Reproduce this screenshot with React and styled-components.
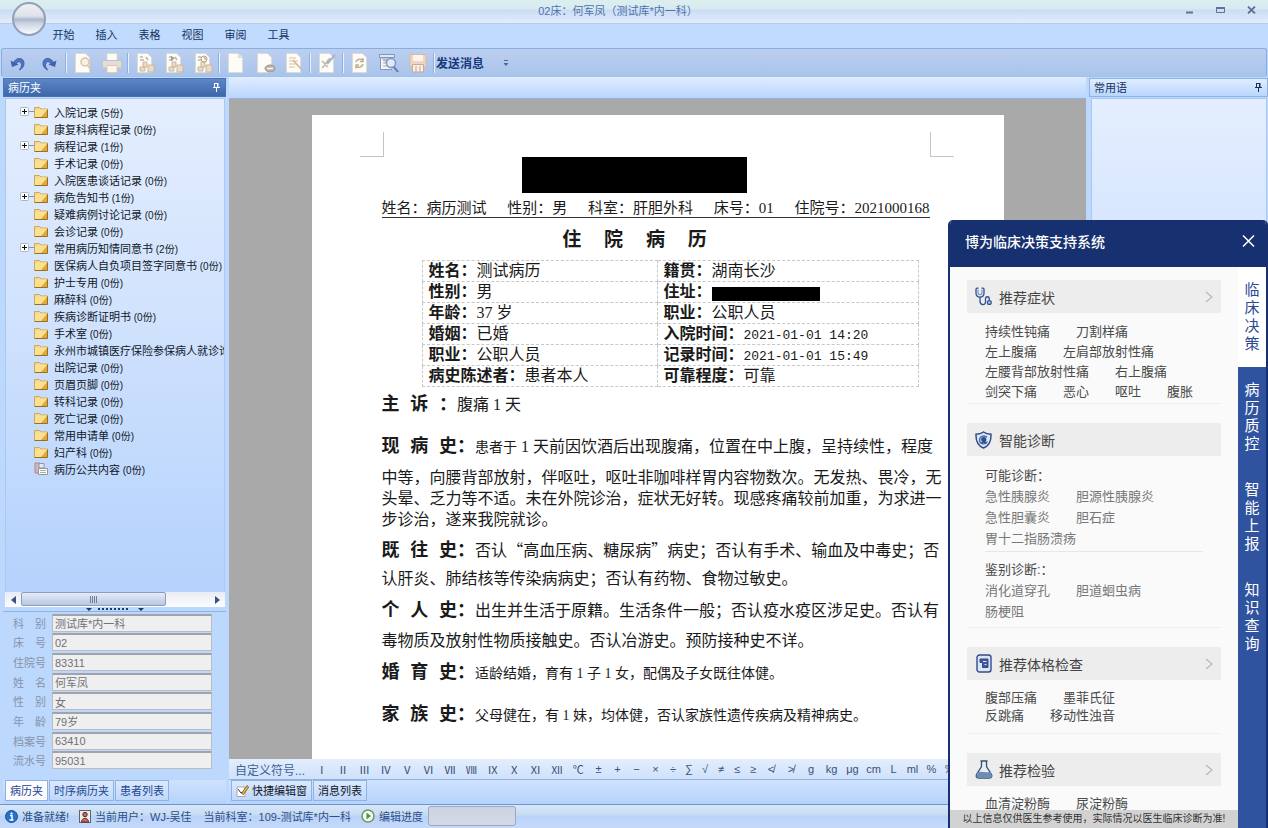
import React, { useState } from "react";
import styled, { createGlobalStyle } from "styled-components";

const GlobalStyle = createGlobalStyle`
  * {
    box-sizing: border-box;
  }
  body {
    margin: 0;
    overflow: hidden;
    font-family: "Liberation Sans", "Noto Sans CJK SC", sans-serif;
    font-size: 11px;
    color: #16335f;
  }
  button {
    font-family: inherit;
    font-size: inherit;
    color: inherit;
    background: none;
    border: none;
    padding: 0;
    cursor: pointer;
    white-space: nowrap;
  }
  svg {
    display: block;
    flex-shrink: 0;
  }
`;

/* ---------- window ---------- */

const Window = styled.div`
  position: relative;
  height: 100vh;
  display: flex;
  flex-direction: column;
  background-color: #bcd8fc;
  overflow: hidden;
`;

const TitleBar = styled.header`
  height: 24px;
  flex-shrink: 0;
  display: flex;
  align-items: center;
  padding-left: 62px;
  padding-bottom: 4px;
  background: linear-gradient(#dcefee 0, #d6eaf2 9px, #cbdcf3 10px, #e0ebfb 22px);
  border-bottom: 1px solid #b4cdea;
`;

const WindowTitle = styled.h1`
  flex: 1;
  margin: 0;
  text-align: center;
  font-size: 11px;
  font-weight: 400;
  color: #4d72ad;
`;

const WindowButton = styled.button`
  width: 31px;
  height: 20px;
  display: flex;
  align-items: center;
  justify-content: center;
`;

const WindowButtons = styled.div`
  width: 94px;
  display: flex;
`;

const Orb = styled.button`
  position: absolute;
  left: 12px;
  top: 2px;
  width: 34px;
  height: 34px;
  border-radius: 50%;
  border: 2px solid #929fb8;
  background: linear-gradient(#eeeff5 0%, #dfe2ea 40%, #adb8cf 52%, #ccd3e2 65%, #fbfcff 100%);
`;

const MenuBar = styled.nav`
  height: 24px;
  flex-shrink: 0;
  display: flex;
  align-items: center;
  padding-left: 42px;
  background-color: #c0dbfd;
`;

const MenuItem = styled.button`
  width: 43px;
  height: 20px;
  padding-bottom: 5px;
`;

const Toolbar = styled.div`
  height: 29px;
  flex-shrink: 0;
  display: flex;
  align-items: center;
  margin: 0 1px;
  border: 1px solid #88aee0;
  border-bottom-color: #a3c1ea;
  border-radius: 3px;
  background: linear-gradient(#bccff0, #a9c4ea);
`;

const ToolButton = styled.button`
  width: ${(props) => (props.$wide ? "31px" : "29px")};
  height: 24px;
  display: flex;
  align-items: center;
  justify-content: center;
`;

const Separator = styled.span`
  width: 2px;
  height: 20px;
  margin: 0 1px;
  border-left: 1px solid #8fb0de;
  border-right: 1px solid #e8f1fd;
`;

const SendButton = styled.button`
  height: 24px;
  font-size: 12px;
  font-weight: 700;
  color: #16397c;
`;

const MoreButton = styled.button`
  width: 44px;
  height: 24px;
  display: flex;
  align-items: center;
  justify-content: center;
`;

const Body = styled.div`
  flex: 1;
  min-height: 0;
  display: flex;
`;

/* ---------- left panel ---------- */

const LeftPanel = styled.aside`
  width: 229px;
  flex-shrink: 0;
  display: flex;
  flex-direction: column;
  padding: 1px 3px 0 3px;
`;

const PanelHeader = styled.div`
  height: 19px;
  flex-shrink: 0;
  display: flex;
  align-items: center;
  justify-content: space-between;
  padding: 0 4px 2px;
  color: ${(props) => (props.$active ? "#fff" : "#16335f")};
  background: ${(props) =>
    props.$active
      ? "linear-gradient(#5c86c6, #3c67aa)"
      : "linear-gradient(#e0edff, #bad6fd)"};
  border: 1px solid ${(props) => (props.$active ? "#4a72b0" : "#8db2e3")};
`;

const TreeBox = styled.div`
  flex: 1;
  min-height: 0;
  margin: 1px 1px 0 2px;
  border: 1px solid #a9c8f2;
  border-bottom: none;
  padding-top: 4px;
  overflow: hidden;
  color: #101828;
  background: linear-gradient(#e4eefe 0, #d0e2fd 45%, #b4d2fd 100%);
`;

const Tree = styled.ul`
  list-style: none;
  margin: 0;
  padding: 0 0 0 14px;
`;

const TreeRow = styled.li`
  height: 17px;
  display: flex;
  align-items: center;
  white-space: nowrap;
`;

const Expander = styled.span`
  width: 14px;
  flex-shrink: 0;
`;

const TreeLabel = styled.span`
  margin-left: 6px;
`;

const Count = styled.span`
  font-size: 10px;
`;

const ScrollBar = styled.div`
  height: 15px;
  flex-shrink: 0;
  display: flex;
  margin: 0 1px 0 2px;
  background: linear-gradient(#e8ecf4, #fdfdff);
`;

const ScrollArrow = styled.button`
  width: 16px;
  display: flex;
  align-items: center;
  justify-content: center;
`;

const ScrollTrack = styled.div`
  flex: 1;
`;

const ScrollThumb = styled.div`
  width: 77%;
  height: 14px;
  display: flex;
  align-items: center;
  justify-content: center;
  border: 1px solid #8b9dbd;
  border-radius: 2px;
  background: linear-gradient(#e6ebf8, #b9c7e0);
`;

const Splitter = styled.div`
  height: 5px;
  flex-shrink: 0;
  display: flex;
  justify-content: center;
  border-bottom: 1px solid #8db2e3;
`;

const PatientForm = styled.form`
  height: 168px;
  flex-shrink: 0;
  display: grid;
  grid-template-rows: repeat(8, 1fr);
  padding: 1px 14px 10px 10px;
`;

const Field = styled.div`
  display: flex;
  align-items: center;
`;

const FieldLabel = styled.label`
  width: 39px;
  color: #8893ab;
  white-space: pre;
`;

const FieldInput = styled.input`
  flex: 1;
  min-width: 0;
  height: 18px;
  padding: 0 2px;
  border: 1px solid #b9bcc2;
  border-top: 2px solid #a0a3aa;
  background-color: #efefef;
  color: #6f7278;
  font-family: inherit;
  font-size: 11px;
`;

const TabStrip = styled.div`
  height: 24px;
  flex-shrink: 0;
  display: flex;
  align-items: flex-start;
  gap: 1px;
  padding: 0 0 2px 2px;
  background: linear-gradient(#cfe2fd, #b5d3fc);
`;

const Tab = styled.button`
  height: 21px;
  display: flex;
  align-items: center;
  gap: 3px;
  padding: 0 4px 1px;
  border: 1px solid #8db2e3;
  color: ${(props) => (props.$dark ? "#101828" : "#1d4791")};
  background: ${(props) =>
    props.$active ? "#fdfdff" : "linear-gradient(#dce9fd, #c0d8fb)"};
`;

/* ---------- document ---------- */

const Center = styled.main`
  flex: 1;
  min-width: 0;
  display: flex;
  flex-direction: column;
`;

const DocTop = styled.div`
  height: 22px;
  flex-shrink: 0;
  background: linear-gradient(#e0edff, #b9d5fc);
  border-bottom: 1px solid #93b3de;
`;

const Canvas = styled.div`
  flex: 1;
  min-height: 0;
  padding-top: 16px;
  overflow: hidden;
  background-color: #aaa9a9;
`;

const Page = styled.article`
  width: 692px;
  min-height: 100%;
  margin: 0 auto;
  padding: 17px 50px 0 48px;
  background-color: #fff;
  color: #1a1a1a;
  font-family: "Liberation Serif", "Noto Sans CJK SC", serif;
  font-size: 16px;
`;

const Margins = styled.div`
  display: flex;
  justify-content: space-between;
  height: 25px;
`;

const Corner = styled.span`
  width: 24px;
  border: 0 solid #c4c4c4;
  border-bottom-width: 1px;
  border-left-width: ${(props) => (props.$right ? "1px" : "0")};
  border-right-width: ${(props) => (props.$right ? "0" : "1px")};
`;

const Sheet = styled.div`
  padding: 0 24px 0 22px;
  white-space: nowrap;
`;

const Redacted = styled.div`
  width: 225px;
  height: 36px;
  margin: 0 auto;
  background-color: #000;
`;

const RedactedInline = styled.span`
  display: inline-block;
  width: 108px;
  height: 14px;
  margin-top: 2px;
  vertical-align: middle;
  background-color: #000;
`;

const Masthead = styled.div`
  padding-right: 42px;
`;

const DocHeader = styled.div`
  display: flex;
  justify-content: space-between;
  margin-top: 7px;
  line-height: 17px;
  font-size: 15px;
  border-bottom: 1px solid #333;
`;

const Num = styled.span`
  font-family: "Liberation Mono", monospace;
  font-size: 13px;
`;

const Quote = styled.span`
  font-family: "Noto Sans CJK SC", sans-serif;
`;

const DocTitle = styled.h2`
  margin: 8px 0 4px;
  font-family: "Liberation Mono", "Noto Sans CJK SC", monospace;
  font-size: 19px;
  line-height: 30px;
  font-weight: 700;
  text-align: center;
  white-space: pre;
`;

const InfoTable = styled.table`
  width: 497px;
  margin-left: 40px;
  border-collapse: collapse;
  table-layout: fixed;
  line-height: 20px;
  td {
    height: 21px;
    padding: 0 0 0 6px;
    border: 1px dashed #c8c8c8;
    text-align: left;
  }
`;

const Cell = styled.div`
  height: 20px;
`;

const Section = styled.section`
  margin-top: ${(props) => props.$gap}px;
`;

const Line = styled.p`
  margin: 0;
  height: ${(props) => (props.$tight ? "21px" : "30px")};
  line-height: ${(props) => (props.$tight ? "21px" : "30px")};
`;

const Heading = styled.strong`
  font-family: "Liberation Mono", "Noto Sans CJK SC", monospace;
  font-size: 18px;
`;

const Small = styled.span`
  font-size: 14px;
`;

const SymbolBar = styled.div`
  height: 21px;
  flex-shrink: 0;
  display: flex;
  align-items: center;
  padding-left: 6px;
  overflow: hidden;
  background: linear-gradient(#e3eefd, #cfe1fb);
  border-bottom: 1px solid #8db2e3;
  color: #3a5078;
`;

const SymbolTitle = styled.span`
  width: 76px;
  font-size: 12px;
  color: #3f6296;
`;

const SymbolGroup = styled.div`
  flex-shrink: 0;
  display: grid;
  grid-auto-flow: column;
  grid-auto-columns: 1fr;
  width: ${(props) => props.$width}px;
`;

/* ---------- right panel ---------- */

const RightPanel = styled.aside`
  width: 182px;
  flex-shrink: 0;
  display: flex;
  flex-direction: column;
  padding: 1px 0 0 3px;
`;

const PhraseBox = styled.div`
  flex: 1;
  margin: 1px 1px 0 2px;
  border: 1px solid #a9c8f2;
  background: linear-gradient(#e4eefe 0, #c4dcfd 45%, #b4d2fd 100%);
`;

const StatusBar = styled.footer`
  height: 24px;
  flex-shrink: 0;
  display: flex;
  align-items: center;
  padding: 0 0 1px 5px;
  border-top: 1px solid #6d96cf;
  background: linear-gradient(#d8e6f8 0, #c7dcf2 10px, #b9d2f8 11px, #c6dafb 100%);
  color: #2c4f88;
`;

const StatusText = styled.span`
  margin: 0 ${(props) => props.$after}px 0 4px;
  white-space: nowrap;
`;

const Progress = styled.div`
  width: 88px;
  height: 20px;
  border: 1px solid #9aa9c2;
  border-radius: 3px;
  background: linear-gradient(#cdd3e2, #d5d9e6);
`;

/* ---------- decision support panel ---------- */

const Cds = styled.section`
  position: absolute;
  top: 220px;
  right: 0;
  bottom: 0;
  width: 320px;
  display: flex;
  flex-direction: column;
  border: 2px solid #163070;
  border-top: none;
  border-bottom: none;
  border-radius: 5px 5px 0 0;
  background-color: #fafafa;
  overflow: hidden;
`;

const CdsHeader = styled.div`
  height: 47px;
  flex-shrink: 0;
  display: flex;
  align-items: center;
  justify-content: space-between;
  padding: 0 11px 6px 15px;
  background-color: #163070;
  color: #fff;
`;

const CdsTitle = styled.h2`
  margin: 0;
  font-size: 14px;
  font-weight: 500;
`;

const CdsBody = styled.div`
  flex: 1;
  min-height: 0;
  display: flex;
`;

const CdsContent = styled.div`
  position: relative;
  flex: 1;
  padding: 13px 17px 0;
  overflow: hidden;
`;

const Card = styled.section`
  margin-bottom: 19px;
  border-bottom: 1px solid #f0f0f0;
`;

const CardHeader = styled.div`
  height: 33px;
  display: flex;
  align-items: center;
  gap: 7px;
  padding: 0 8px;
  background-color: #ededed;
  color: #444;
`;

const CardIcon = styled.span`
  width: 17px;
  display: flex;
  justify-content: center;
`;

const CardTitle = styled.h3`
  flex: 1;
  margin: 0;
  font-size: 14px;
  font-weight: 400;
`;

const CardBody = styled.div`
  padding: 9px 18px ${(props) => props.$bottom}px;
  font-size: 13px;
  color: #4a4a4a;
`;

const Terms = styled.div`
  display: flex;
  gap: 26px;
  line-height: ${(props) => (props.$tight ? "18px" : "20px")};
`;

const Pairs = styled.div`
  display: grid;
  grid-template-columns: 91px 1fr;
  line-height: 21px;
  color: #777;
`;

const PairTitle = styled.h4`
  margin: 0;
  font-size: 13px;
  font-weight: 400;
  line-height: 21px;
`;

const Rule = styled.hr`
  margin: 2px 0 7px;
  border: none;
  border-top: 1px solid #e8e8e8;
`;

const Term = styled.button`
  text-align: left;
  line-height: inherit;
`;

const Disclaimer = styled.p`
  position: absolute;
  left: 0;
  right: 0;
  bottom: 0;
  margin: 0;
  height: 18px;
  line-height: 18px;
  text-align: center;
  font-size: 10px;
  color: #333;
  background-color: #d2d2d2;
`;

const SideTabs = styled.nav`
  width: 28px;
  flex-shrink: 0;
  background-color: #3053a0;
`;

const SideTab = styled.button`
  width: 28px;
  height: 100px;
  display: flex;
  align-items: center;
  justify-content: center;
  font-size: 15px;
  line-height: 18px;
  color: ${(props) => (props.$active ? "#2c4a94" : "#fff")};
  background-color: ${(props) => (props.$active ? "#fff" : "transparent")};
`;

const SideText = styled.span`
  width: 15px;
  white-space: normal;
  word-break: break-all;
`;

/* ---------- icons ---------- */

const Pin = () => (
  <svg width="9" height="10" viewBox="0 0 9 10" fill="none" stroke="currentColor">
    <path d="M2.5 1V5.5M2.5 1.5H6M6 1V5.5M1 5.5H8M4.5 6V10" />
    <path d="M5.5 1V5.5" />
  </svg>
);

const Undo = ({ flip }) => (
  <svg width="18" height="18" viewBox="0 0 18 18">
    <g transform={flip ? "translate(18 0) scale(-1 1)" : undefined}>
      <path
        d="M4.500 9C6 3.500 14.500 2.500 15 9C15.200 12 13.500 14.500 10.500 16C12.500 13 13.200 11 12 9C10.500 6.500 8 8 7 10.500Z"
        fill="#4f74c4"
        stroke="#3f61ad"
        strokeWidth="1"
        strokeLinejoin="round"
      />
      <path d="M1.500 6.500L3 13L9.500 10.500Z" fill="#3f61ad" />
    </g>
  </svg>
);

const Sheetlet = ({ kind }) => (
  <svg width="22" height="22" viewBox="0 0 22 22">
    {kind !== "print" && kind !== "find" && kind !== "save" && (
      <path d="M3.500 1.500H13.500L17.500 5.500V20.500H3.500Z" fill="#fdfcf6" stroke="#dcdbd5" />
    )}
    {kind === "page" && <path d="M13.500 1.500V5.500H17.500" fill="#ececec" stroke="#d2d2ce" />}
    {kind === "preview" && (
      <g fill="none" stroke="#e3bf9c" strokeWidth="1.500">
        <circle cx="13" cy="10" r="4" fill="#f5f1ea" />
        <path d="M15.500 13.500L18.500 17" />
      </g>
    )}
    {kind === "print" && (
      <g>
        <path d="M6 1.500H16V9H6Z" fill="#fdfcf6" stroke="#ded8ce" />
        <path d="M1.500 8.500H20.500V16H1.500Z" fill="#e2dedc" stroke="#c8c2be" />
        <path d="M6 13.500H16V20.500H6Z" fill="#fbf7ec" stroke="#dfcbae" />
      </g>
    )}
    {(kind === "copy" || kind === "copy2" || kind === "copy3") && (
      <g>
        <path d="M6 5H9M6 8H10M12 5L14 8" stroke="#bdb5ab" strokeWidth="1.500" />
        <path d="M9 10H13V15H9ZM14 13H20V20H14ZM6 15H11V19H6Z" fill="#eadccb" stroke="#cfb698" />
        {kind === "copy3" && <circle cx="12" cy="7" r="3" fill="none" stroke="#b9a184" />}
        {kind === "copy2" && <path d="M8 4L12 6L8 9" fill="#9d9d9d" />}
      </g>
    )}
    {kind === "remove" && (
      <g>
        <ellipse cx="16" cy="16.500" rx="5" ry="3.500" fill="#b5b1a8" stroke="#9d998e" />
        <path d="M13 16.500H19" stroke="#fff" strokeWidth="1.500" />
      </g>
    )}
    {kind === "edit" && (
      <g fill="none" stroke="#d6c0a8">
        <path d="M6 6H13M6 9H15M6 12H14M6 15H12" />
        <path d="M10 8L18 17" stroke="#dcb48c" strokeWidth="1.600" />
      </g>
    )}
    {kind === "sign" && (
      <g fill="none" stroke="#c2b5a4" strokeWidth="1.500">
        <path d="M6 9L9 12L14 6M6 16L9 13L12 15" />
        <path d="M11 12L19 3" stroke="#a9b3c3" strokeWidth="2" />
      </g>
    )}
    {kind === "refresh" && (
      <path
        d="M7 10C8 6.500 13 6.500 14 9M14 6V9.500H11M14 12C13 16 8 16 7 13.500M7 16.500V13H10"
        fill="none"
        stroke="#c2b098"
        strokeWidth="1.500"
      />
    )}
    {kind === "find" && (
      <g fill="none" stroke="#7f96bd">
        <path d="M1.500 2.500H16.500V5.500H1.500Z" fill="#dfe8f6" />
        <path d="M2.500 5.500V17.500H14" fill="#f3f5f8" />
        <path d="M5 8H9M5 11H8M5 14H9" stroke="#c0a88e" />
        <circle cx="13" cy="11" r="4.500" fill="#dceafa" strokeWidth="1.500" />
        <path d="M16 15L20 20" stroke="#5f78a8" strokeWidth="2" />
      </g>
    )}
    {kind === "save" && (
      <g>
        <path d="M3 2.500H19V15H3Z" fill="#f1d3c1" stroke="#dcb7a2" />
        <path d="M6 3H16V9H6Z" fill="#fcf4ee" />
        <path d="M5.500 12.500H16.500V20H5.500Z" fill="#f7efe8" stroke="#cfa893" />
        <path d="M9 14V20M13 14V20" stroke="#c9a590" />
      </g>
    )}
  </svg>
);

const Folder = () => (
  <svg width="14" height="12" viewBox="0 0 14 12">
    <path d="M0.500 11V1.500H5.500L7 3H13.500V11Z" fill="#f4d795" stroke="#cfa75a" />
    <path d="M1 11V5L4 3.500H13V11Z" fill="#fbe08f" />
    <path d="M7 11L13 4V11Z" fill="#e3a83d" />
    <path d="M0.500 11.500H13.500V3.500" fill="none" stroke="#96701f" />
  </svg>
);

const PublicIcon = () => (
  <svg width="14" height="13" viewBox="0 0 14 13">
    <path d="M1 1H6V11H1Z" fill="#d8b4b8" stroke="#a98890" />
    <path d="M5 1.500H10V6H5Z" fill="#e6e9f3" stroke="#8c97ad" />
    <path d="M4.500 6.500H13.500V12.500H4.500Z" fill="#fff" stroke="#8a9a8f" />
    <path d="M6 8.500H12M6 10.500H12" stroke="#a3b59f" />
  </svg>
);

const Plus = () => (
  <svg width="14" height="9" viewBox="0 0 14 9">
    <rect x="0.500" y="0.500" width="8" height="8" rx="1" fill="#fff" stroke="#a9b4c6" />
    <path d="M2 4.500H7M4.500 2V7" stroke="#111" />
    <path d="M9 4.500H14" stroke="#8995a8" />
  </svg>
);

const Arrow = ({ left }) => (
  <svg width="5" height="8" viewBox="0 0 5 8">
    <path d={left ? "M5 0V8L0 4Z" : "M0 0V8L5 4Z"} fill="#38517e" />
  </svg>
);

const Grip = () => (
  <svg width="7" height="7" viewBox="0 0 7 7" stroke="#6f7f9c">
    <path d="M0.500 0V7M2.500 0V7M4.500 0V7M6.500 0V7" />
  </svg>
);

const SplitGrip = () => (
  <svg width="58" height="4" viewBox="0 0 58 4">
    <path d="M0 1H6L3 4ZM52 1H58L55 4Z" fill="#1d3a68" />
    <path d="M12 2H44" stroke="#1d3a68" strokeWidth="2" strokeDasharray="2 2" />
  </svg>
);

const InfoIcon = () => (
  <svg width="13" height="13" viewBox="0 0 13 13">
    <circle cx="6.500" cy="6.500" r="6" fill="#2573c9" stroke="#15529d" />
    <circle cx="6.500" cy="3.500" r="1.100" fill="#fff" />
    <path d="M5 5.500H7V9.500M4.500 10H8.500" stroke="#fff" strokeWidth="1.500" fill="none" />
  </svg>
);

const UserIcon = () => (
  <svg width="12" height="13" viewBox="0 0 12 13">
    <rect x="0.500" y="0.500" width="11" height="12" fill="#f3e9e6" stroke="#55647f" />
    <circle cx="6" cy="4.500" r="2.200" fill="#b5705b" stroke="#4c2f2a" />
    <path d="M2.500 12C2.500 7 9.500 7 9.500 12Z" fill="#d2664f" stroke="#5b3731" />
  </svg>
);

const PlayIcon = () => (
  <svg width="14" height="14" viewBox="0 0 14 14">
    <circle cx="7" cy="7" r="6" fill="#f3f9ef" stroke="#75916f" strokeWidth="1.500" />
    <path d="M5.500 3.500L10 7L5.500 10.500Z" fill="#3fa22f" />
  </svg>
);

const PenIcon = () => (
  <svg width="13" height="13" viewBox="0 0 13 13">
    <path d="M1 3H9V12.500H1Z" fill="#fff" stroke="#a9a9b5" />
    <path d="M2 5L5 9L7 8" fill="none" stroke="#333" />
    <path d="M5.500 9.500L11 1.500L12.700 3L7.500 10.500Z" fill="#e6bd3d" stroke="#6b551a" strokeWidth="0.800" />
  </svg>
);

const Chevron = () => (
  <svg width="8" height="12" viewBox="0 0 8 12" fill="none" stroke="#b9b9b9" strokeWidth="1.200">
    <path d="M1 1L7 6L1 11" />
  </svg>
);

const Stethoscope = () => (
  <svg width="17" height="19" viewBox="0 0 17 19" fill="none" stroke="#2f538f" strokeWidth="1.300">
    <path d="M3.500 1.200H2C1.300 1.200 1 1.700 1 2.500V6C1 11.500 9 11.500 9 6V2.500C9 1.700 8.700 1.200 8 1.200H6.500" />
    <path d="M3 2.500V6C3.500 8.300 6.500 8.300 7 6V2.500" stroke="#6f97c9" strokeWidth="1.200" />
    <path d="M5 10V14C5 18.700 10.500 18.700 10.500 15V12C10.500 9 14.300 9 14.300 12V13.500" />
    <circle cx="14.300" cy="15.500" r="1.900" fill="#b9d0ea" />
  </svg>
);

const Shield = () => (
  <svg width="17" height="18" viewBox="0 0 17 18" fill="none" stroke="#2b4586" strokeWidth="1.400">
    <path d="M8.500 1C11 3 13.500 3.300 16 3.300C16.300 10 14.500 14.500 8.500 17C2.500 14.500 0.700 10 1 3.300C3.500 3.300 6 3 8.500 1Z" fill="#dce7f5" />
    <path d="M12 6.500C10 4 5 4.500 4.500 9C4.500 13 10 14.500 12.500 10.500" stroke="#3f6fb3" />
    <circle cx="8.700" cy="8.500" r="1.900" fill="#35569a" />
    <path d="M6.500 12.500C7.500 10.500 10 10.500 11 12.500" />
  </svg>
);

const Clipboard = () => (
  <svg width="16" height="19" viewBox="0 0 16 19" fill="none" stroke="#344b8d" strokeWidth="1.400">
    <rect x="1" y="1" width="14" height="17" rx="2.500" fill="#dbe5f3" />
    <path d="M4 5H12V13.500H6.500V8.500H4Z" fill="#3d599d" strokeWidth="1" />
    <path d="M7 7.500H10.500M8.500 10.500H10.500" stroke="#dbe5f3" strokeWidth="1" />
  </svg>
);

const Flask = () => (
  <svg width="18" height="19" viewBox="0 0 18 19" fill="none" stroke="#34507f" strokeWidth="1.300">
    <path d="M5.500 1H12.500M6.500 1V6.500L1.500 14.500C0.800 17 1.500 18 3.500 18H14.500C16.500 18 17.200 17 16.500 14.500L11.500 6.500V1" />
    <path d="M2 13C6 10 10 14 15.500 11.500L17 16C16.500 17.500 16 18 14.500 18H3.500C1.500 18 1.200 16 2 13Z" fill="#6d8cb4" stroke="none" />
  </svg>
);

/* ---------- data ---------- */

const menus = ["开始", "插入", "表格", "视图", "审阅", "工具"];

const toolGroups = [
  ["preview", "print"],
  ["copy", "copy2", "copy3"],
  ["page", "remove", "edit"],
  ["sign"],
  ["refresh", "find", "save"],
];

const folders = [
  { name: "入院记录", count: 5, open: true },
  { name: "康复科病程记录", count: 0 },
  { name: "病程记录", count: 1, open: true },
  { name: "手术记录", count: 0 },
  { name: "入院医患谈话记录", count: 0 },
  { name: "病危告知书", count: 1, open: true },
  { name: "疑难病例讨论记录", count: 0 },
  { name: "会诊记录", count: 0 },
  { name: "常用病历知情同意书", count: 2, open: true },
  { name: "医保病人自负项目签字同意书", count: 0 },
  { name: "护士专用", count: 0 },
  { name: "麻醉科", count: 0 },
  { name: "疾病诊断证明书", count: 0 },
  { name: "手术室", count: 0 },
  { name: "永州市城镇医疗保险参保病人就诊询", count: null },
  { name: "出院记录", count: 0 },
  { name: "页眉页脚", count: 0 },
  { name: "转科记录", count: 0 },
  { name: "死亡记录", count: 0 },
  { name: "常用申请单", count: 0 },
  { name: "妇产科", count: 0 },
  { name: "病历公共内容", count: 0, shared: true },
];

const fields = [
  ["dept", "科　别", "测试库*内一科"],
  ["bed", "床　号", "02"],
  ["admission", "住院号", "83311"],
  ["name", "姓　名", "何军凤"],
  ["sex", "性　别", "女"],
  ["age", "年　龄", "79岁"],
  ["archive", "档案号", "63410"],
  ["serial", "流水号", "95031"],
];

const symbolGroups = [
  { width: 278, items: ["Ⅰ", "Ⅱ", "Ⅲ", "Ⅳ", "Ⅴ", "Ⅵ", "Ⅶ", "Ⅷ", "Ⅸ", "Ⅹ", "Ⅺ", "Ⅻ", "℃"] },
  { width: 76, items: ["±", "+", "−", "×"] },
  { width: 96, items: ["÷", "∑", "√", "≠", "≤", "≥"] },
  { width: 60, items: ["≮", "≯", "g"] },
  { width: 63, items: ["kg", "μg", "cm"] },
  { width: 76, items: ["L", "ml", "%", "‰"] },
];

const info = [
  ["姓名：", "测试病历", "籍贯：", "湖南长沙"],
  ["性别：", "男", "住址：", <RedactedInline key="address" />],
  ["年龄：", "37 岁", "职业：", "公职人员"],
  ["婚姻：", "已婚", "入院时间：", <Num key="in">2021-01-01 14:20</Num>],
  ["职业：", "公职人员", "记录时间：", <Num key="rec">2021-01-01 15:49</Num>],
  ["病史陈述者：", "患者本人", "可靠程度：", "可靠"],
];

const symptoms = [
  ["持续性钝痛", "刀割样痛"],
  ["左上腹痛", "左肩部放射性痛"],
  ["左腰背部放射性痛", "右上腹痛"],
  ["剑突下痛", "恶心", "呕吐", "腹胀"],
];

const exams = [
  ["腹部压痛", "墨菲氏征"],
  ["反跳痛", "移动性浊音"],
];

const sideTabs = ["临床决策", "病历质控", "智能上报", "知识查询"];

/* ---------- parts ---------- */

const RecommendCard = ({ icon, title, more, bottom, children }) => (
  <Card>
    <CardHeader>
      <CardIcon>{icon}</CardIcon>
      <CardTitle>{title}</CardTitle>
      {more && (
        <button aria-label={title}>
          <Chevron />
        </button>
      )}
    </CardHeader>
    <CardBody $bottom={bottom}>{children}</CardBody>
  </Card>
);

const TermRows = ({ rows, tight }) =>
  rows.map((row) => (
    <Terms key={row[0]} $tight={tight}>
      {row.map((term) => (
        <Term key={term}>{term}</Term>
      ))}
    </Terms>
  ));

const PairList = ({ items }) => (
  <Pairs>
    {items.map((item) => (
      <Term key={item}>{item}</Term>
    ))}
  </Pairs>
);

const DecisionSupport = ({ onClose }) => {
  const [tab, setTab] = useState("临床决策");

  return (
    <Cds>
      <CdsHeader>
        <CdsTitle>博为临床决策支持系统</CdsTitle>
        <button aria-label="关闭" onClick={onClose}>
          <svg width="13" height="12" viewBox="0 0 13 12" stroke="#fff" strokeWidth="1.500">
            <path d="M1 0.500L12 11.500M12 0.500L1 11.500" />
          </svg>
        </button>
      </CdsHeader>
      <CdsBody>
        <CdsContent>
          <RecommendCard icon={<Stethoscope />} title="推荐症状" more bottom={1}>
            <TermRows rows={symptoms} />
          </RecommendCard>
          <RecommendCard icon={<Shield />} title="智能诊断" bottom={5}>
            <PairTitle>可能诊断：</PairTitle>
            <PairList
              items={["急性胰腺炎", "胆源性胰腺炎", "急性胆囊炎", "胆石症", "胃十二指肠溃疡"]}
            />
            <Rule />
            <PairTitle>鉴别诊断:：</PairTitle>
            <PairList items={["消化道穿孔", "胆道蛔虫病", "肠梗阻"]} />
          </RecommendCard>
          <RecommendCard icon={<Clipboard />} title="推荐体格检查" more bottom={8}>
            <TermRows rows={exams} tight />
          </RecommendCard>
          <RecommendCard icon={<Flask />} title="推荐检验" more bottom={8}>
            <TermRows rows={[["血清淀粉酶", "尿淀粉酶"]]} tight />
          </RecommendCard>
          <Disclaimer>以上信息仅供医生参考使用，实际情况以医生临床诊断为准!</Disclaimer>
        </CdsContent>
        <SideTabs>
          {sideTabs.map((name) => (
            <SideTab key={name} $active={name === tab} onClick={() => setTab(name)}>
              <SideText>{name}</SideText>
            </SideTab>
          ))}
        </SideTabs>
      </CdsBody>
    </Cds>
  );
};

const Record = () => (
  <Page>
    <Margins>
      <Corner />
      <Corner $right />
    </Margins>
    <Sheet>
      <Masthead>
        <Redacted />
      </Masthead>
      <DocHeader>
        <span>姓名：病历测试</span>
        <span>性别：男</span>
        <span>科室：肝胆外科</span>
        <span>床号：01</span>
        <span>住院号：2021000168</span>
      </DocHeader>
      <Masthead>
        <DocTitle>{"住  院  病  历"}</DocTitle>
      </Masthead>
      <InfoTable>
        <colgroup>
          <col width="235" />
          <col />
        </colgroup>
        <tbody>
          {info.map((row) => (
            <tr key={row[0]}>
              <td>
                <Cell>
                  <b>{row[0]}</b>
                  {row[1]}
                </Cell>
              </td>
              <td>
                <Cell>
                  <b>{row[2]}</b>
                  {row[3]}
                </Cell>
              </td>
            </tr>
          ))}
        </tbody>
      </InfoTable>
      <Section $gap={3}>
        <Line>
          <Heading>主 诉 ：</Heading>腹痛 1 天
        </Line>
      </Section>
      <Section $gap={12}>
        <Line>
          <Heading>现 病 史：</Heading>
          <Small>患者于</Small> 1 天前因饮酒后出现腹痛，位置在中上腹，呈持续性，程度
        </Line>
      </Section>
      <Section $gap={5}>
        <Line $tight>中等，向腰背部放射，伴呕吐，呕吐非咖啡样胃内容物数次。无发热、畏冷，无</Line>
        <Line $tight>头晕、乏力等不适。未在外院诊治，症状无好转。现感疼痛较前加重，为求进一</Line>
        <Line $tight>步诊治，遂来我院就诊。</Line>
      </Section>
      <Section $gap={4}>
        <Line>
          <Heading>既 往 史：</Heading>否认<Quote>“</Quote>高血压病、糖尿病<Quote>”</Quote>
          病史；否认有手术、输血及中毒史；否
        </Line>
        <Line>认肝炎、肺结核等传染病病史；否认有药物、食物过敏史。</Line>
      </Section>
      <Section $gap={2}>
        <Line>
          <Heading>个 人 史：</Heading>出生并生活于原籍。生活条件一般；否认疫水疫区涉足史。否认有
        </Line>
        <Line>毒物质及放射性物质接触史。否认冶游史。预防接种史不详。</Line>
      </Section>
      <Section $gap={2}>
        <Line>
          <Heading>婚 育 史：</Heading>
          <Small>适龄结婚，育有 1 子 1 女，配偶及子女既往体健。</Small>
        </Line>
      </Section>
      <Section $gap={12}>
        <Line>
          <Heading>家 族 史：</Heading>
          <Small>父母健在，有 1 妹，均体健，否认家族性遗传疾病及精神病史。</Small>
        </Line>
      </Section>
    </Sheet>
  </Page>
);

const App = () => {
  const [showCds, setShowCds] = useState(true);

  return (
    <Window>
      <GlobalStyle />
      <TitleBar>
        <WindowTitle>02床：何军凤（测试库*内一科）</WindowTitle>
        <WindowButtons>
          <WindowButton aria-label="最小化">
            <svg width="9" height="9" viewBox="0 0 9 9">
              <path d="M1 7.500H8" stroke="#5d7396" strokeWidth="2" />
            </svg>
          </WindowButton>
          <WindowButton aria-label="最大化">
            <svg width="9" height="9" viewBox="0 0 9 9" fill="none" stroke="#5d7396">
              <path d="M0.500 2.500H8.500V7.500H0.500Z" />
              <path d="M0 3H9" strokeWidth="2" />
            </svg>
          </WindowButton>
          <WindowButton aria-label="关闭">
            <svg width="9" height="8" viewBox="0 0 9 8" stroke="#5d7396" strokeWidth="1.800">
              <path d="M1 0.500L8 7.500M8 0.500L1 7.500" />
            </svg>
          </WindowButton>
        </WindowButtons>
      </TitleBar>
      <MenuBar>
        {menus.map((menu) => (
          <MenuItem key={menu}>{menu}</MenuItem>
        ))}
      </MenuBar>
      <Orb aria-label="主菜单" />
      <Toolbar>
        <ToolButton $wide aria-label="撤销">
          <Undo />
        </ToolButton>
        <ToolButton $wide aria-label="恢复">
          <Undo flip />
        </ToolButton>
        <Separator />
        {toolGroups.map((group) => (
          <React.Fragment key={group[0]}>
            {group.map((kind) => (
              <ToolButton key={kind} aria-label={kind}>
                <Sheetlet kind={kind} />
              </ToolButton>
            ))}
            <Separator />
          </React.Fragment>
        ))}
        <SendButton>发送消息</SendButton>
        <MoreButton aria-label="更多">
          <svg width="6" height="6" viewBox="0 0 6 6">
            <path d="M1 0.500H5" stroke="#47669c" />
            <path d="M0.500 3H5.500L3 6Z" fill="#47669c" />
          </svg>
        </MoreButton>
      </Toolbar>
      <Body>
        <LeftPanel>
          <PanelHeader $active>
            病历夹
            <Pin />
          </PanelHeader>
          <TreeBox>
            <Tree>
              {folders.map((folder) => (
                <TreeRow key={folder.name}>
                  <Expander>{folder.open && <Plus />}</Expander>
                  {folder.shared ? <PublicIcon /> : <Folder />}
                  <TreeLabel>
                    {folder.name}
                    {folder.count !== null && <Count> ({folder.count}份)</Count>}
                  </TreeLabel>
                </TreeRow>
              ))}
            </Tree>
          </TreeBox>
          <ScrollBar>
            <ScrollArrow aria-label="向左">
              <Arrow left />
            </ScrollArrow>
            <ScrollTrack>
              <ScrollThumb>
                <Grip />
              </ScrollThumb>
            </ScrollTrack>
            <ScrollArrow aria-label="向右">
              <Arrow />
            </ScrollArrow>
          </ScrollBar>
          <Splitter>
            <SplitGrip />
          </Splitter>
          <PatientForm>
            {fields.map(([id, label, value]) => (
              <Field key={id}>
                <FieldLabel htmlFor={id}>{label}</FieldLabel>
                <FieldInput id={id} value={value} readOnly />
              </Field>
            ))}
          </PatientForm>
          <TabStrip>
            <Tab $active>病历夹</Tab>
            <Tab>时序病历夹</Tab>
            <Tab>患者列表</Tab>
          </TabStrip>
        </LeftPanel>
        <Center>
          <DocTop />
          <Canvas>
            <Record />
          </Canvas>
          <SymbolBar>
            <SymbolTitle>自定义符号...</SymbolTitle>
            {symbolGroups.map((group) => (
              <SymbolGroup key={group.width + group.items[0]} $width={group.width}>
                {group.items.map((symbol) => (
                  <button key={symbol}>{symbol}</button>
                ))}
              </SymbolGroup>
            ))}
          </SymbolBar>
          <TabStrip>
            <Tab $dark>
              <PenIcon />
              快捷编辑窗
            </Tab>
            <Tab $dark>消息列表</Tab>
          </TabStrip>
        </Center>
        <RightPanel>
          <PanelHeader>
            常用语
            <Pin />
          </PanelHeader>
          <PhraseBox />
        </RightPanel>
      </Body>
      <StatusBar>
        <InfoIcon />
        <StatusText $after={10}>准备就绪!</StatusText>
        <UserIcon />
        <StatusText $after={8}>当前用户：WJ-吴佳</StatusText>
        <StatusText $after={10}>当前科室：109-测试库*内一科</StatusText>
        <PlayIcon />
        <StatusText $after={5}>编辑进度</StatusText>
        <Progress />
      </StatusBar>
      {showCds && <DecisionSupport onClose={() => setShowCds(false)} />}
    </Window>
  );
};

export default App;
